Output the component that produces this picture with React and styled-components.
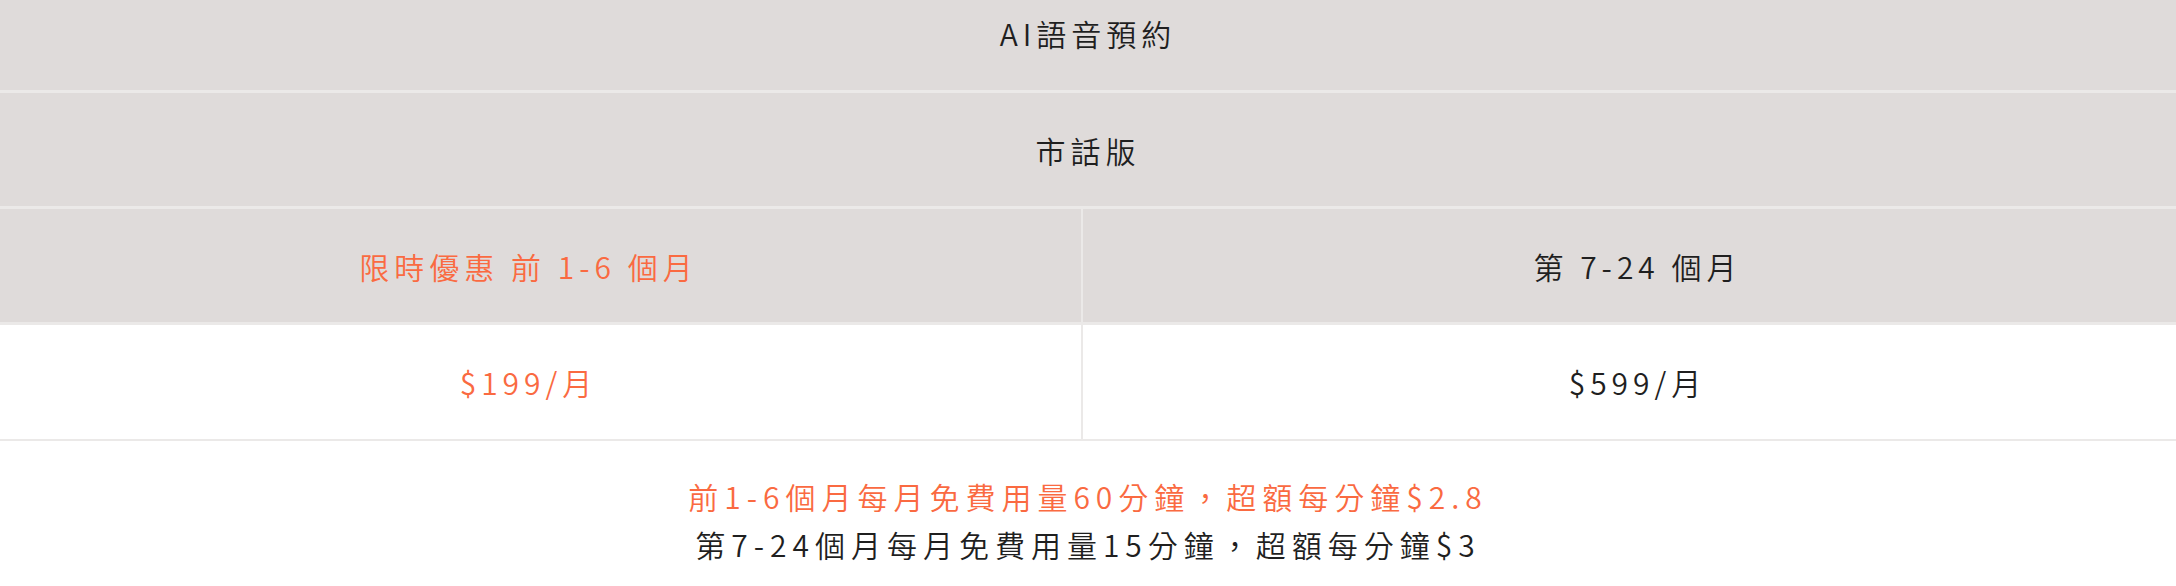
import React from 'react'
import styled, { createGlobalStyle } from 'styled-components'

const GlobalStyle = createGlobalStyle`
    html, body {
        margin: 0;
        padding: 0;
        background: #ffffff;
    }
    body {
        font-family: "Noto Sans CJK TC", "Noto Sans", sans-serif;
        -webkit-font-smoothing: antialiased;
    }
`

const line = '#ebe9e8'
const gray = '#dfdbda'
const orange = '#fa6a41'
const dark = '#1f1f1f'

const PriceTable = styled.div`
    width: 100%;
    display: flex;
    flex-direction: column;
`

const FullRow = styled.div`
    height: ${props => props.height}px;
    padding-bottom: ${props => props.offset || 0}px;
    box-sizing: border-box;
    background: ${gray};
    border-bottom: 3px solid ${line};
    display: flex;
    align-items: center;
    justify-content: center;
`

const SplitRow = styled.div`
    display: grid;
    grid-template-columns: 1083px 1fr;
    box-sizing: border-box;
    height: ${props => props.height}px;
    background: ${props => (props.light ? '#ffffff' : gray)};
    border-bottom: ${props => props.borderWidth || 3}px solid ${line};
`

const Cell = styled.div`
    display: flex;
    align-items: center;
    justify-content: center;
    box-sizing: border-box;
    &:first-child {
        border-right: 2px solid ${line};
        padding-right: 24px;
    }
    &:last-child {
        padding-left: 16px;
    }
`

const Label = styled.span`
    font-size: 30px;
    font-weight: 350;
    line-height: 1;
    letter-spacing: 5px;
    color: ${props => (props.accent ? orange : dark)};
    white-space: pre;
`

const Notes = styled.div`
    padding-top: 31px;
    display: flex;
    flex-direction: column;
    align-items: center;
`

const NoteLine = styled.p`
    margin: 0;
    font-size: 30px;
    font-weight: 350;
    line-height: 48px;
    letter-spacing: 6px;
    color: ${props => (props.accent ? orange : dark)};
`

const App = () => {
    return (
        <>
            <GlobalStyle />
            <PriceTable>
                <FullRow height={93} offset={24}>
                    <Label>AI語音預約</Label>
                </FullRow>
                <FullRow height={116}>
                    <Label>市話版</Label>
                </FullRow>
                <SplitRow height={116}>
                    <Cell>
                        <Label accent>限時優惠 前 1-6 個月</Label>
                    </Cell>
                    <Cell>
                        <Label>第 7-24 個月</Label>
                    </Cell>
                </SplitRow>
                <SplitRow height={116} light borderWidth={2}>
                    <Cell>
                        <Label accent>$199/月</Label>
                    </Cell>
                    <Cell>
                        <Label>$599/月</Label>
                    </Cell>
                </SplitRow>
                <Notes>
                    <NoteLine accent>前1-6個月每月免費用量60分鐘，超額每分鐘$2.8</NoteLine>
                    <NoteLine>第7-24個月每月免費用量15分鐘，超額每分鐘$3</NoteLine>
                </Notes>
            </PriceTable>
        </>
    )
}

export default App
